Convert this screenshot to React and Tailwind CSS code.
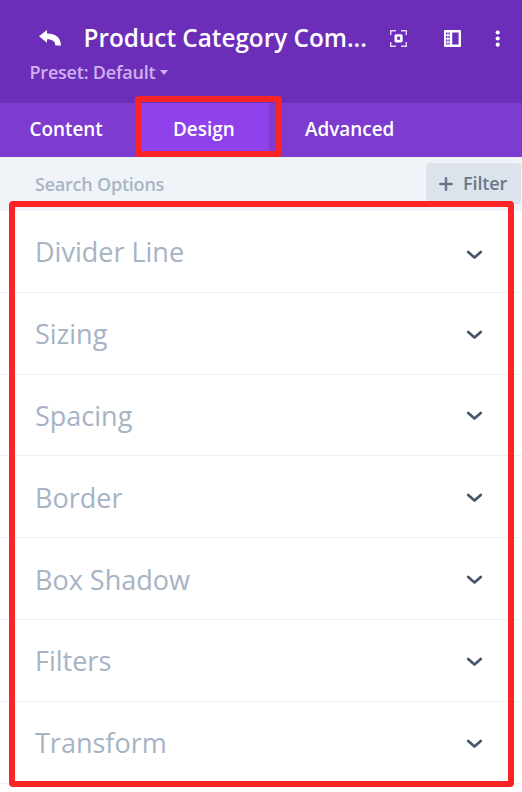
const sections = [
  { name: 'Divider Line', shift: 'mt-[8px]' },
  { name: 'Sizing', shift: 'mt-[3px]' },
  { name: 'Spacing', shift: 'mt-[3px]' },
  { name: 'Border', shift: 'mt-[3px]' },
  { name: 'Box Shadow', shift: 'mt-[3px]' },
  { name: 'Filters', shift: 'mt-[4px]' },
  { name: 'Transform', shift: 'mt-[4px]' },
];

function BackIcon() {
  return (
    <svg className="ml-[39px] mt-[30px] h-4 w-[22px] shrink-0" viewBox="0 0 22 16" fill="#fff">
      <path d="M0 6.300 8 0v3.500c8.500 0 14 4.300 14 12h-5.600C16.400 11.500 13.500 9.200 8 9.200v3.600z" />
    </svg>
  );
}

function FocusIcon() {
  return (
    <svg className="h-[17px] w-[17px]" viewBox="0 0 17 17" fill="none" stroke="#fff">
      <path strokeWidth="1.4" stroke="#e6d8f5" d="M.7 5V.7H6M11 .7h5.300V5M16.300 12v4.300H11M6 16.300H.7V12" />
      <rect x="5.800" y="5.500" width="5.600" height="5.600" rx=".4" strokeWidth="2.600" />
    </svg>
  );
}

function PanelIcon() {
  return (
    <svg className="h-[17px] w-[17px]" viewBox="0 0 17 17">
      <path fill="#fff" fillRule="evenodd" d="M1 0h15a1 1 0 0 1 1 1v15a1 1 0 0 1-1 1H1a1 1 0 0 1-1-1V1a1 1 0 0 1 1-1zM2 2.400v2h3.800v-2zM2 6v2h3.800V6zM2 9.400v2h3.800v-2zM2 12.800v1.800h3.800v-1.800zM8.200 2.400v12.200h6.400V2.400z" />
      <path stroke="#fff" strokeWidth=".8" d="M3.900 1v15" />
    </svg>
  );
}

function Chevron() {
  return (
    <svg className="h-[10px] w-[18px]" viewBox="0 0 18 10" fill="none" stroke="#46566a" strokeWidth="2.700" strokeLinecap="round" strokeLinejoin="round">
      <path d="m2.200 2 6.300 5.600L14.800 2" />
    </svg>
  );
}

export default function App() {
  return (
    <div className="relative h-[792px] w-[522px] overflow-hidden bg-white font-['Open_Sans',sans-serif]">
      <header className="h-[103px] bg-[#6c2eb9] text-white">
        <div className="flex h-[57px]">
          <BackIcon />
          <h1 className="ml-[22.500px] mt-[21px] w-[306.500px] shrink-0 whitespace-nowrap text-[24.300px] font-semibold leading-[34px]">Product Category Com...</h1>
          <div className="mt-[30px] flex items-start">
            <FocusIcon />
            <span className="ml-[37px]"><PanelIcon /></span>
            <svg className="ml-[34px] h-[17px] w-[6px]" viewBox="0 0 6 17" fill="#fff">
              <circle cx="2.700" cy="2.500" r="2.100" /><circle cx="2.700" cy="8.500" r="2.100" /><circle cx="2.700" cy="14.700" r="2.100" />
            </svg>
          </div>
        </div>
        <div className="ml-[29.500px] mt-[2px] flex items-center text-[18px] font-semibold leading-[26px] tracking-[-0.22px] text-[#cfb0ee]">
          <span>Preset: Default</span>
          <svg className="ml-[5px] mt-[1px] h-[5px] w-[8px]" viewBox="0 0 8 5" fill="currentColor"><path d="M0 0h8L4 5z" /></svg>
        </div>
      </header>
      <nav className="flex h-[54px] bg-[#7e3bd0] text-[18.900px] font-semibold leading-[52px] text-white">
        <span className="w-[139px] pl-[29.500px]">Content</span>
        <span className="w-[130px] bg-[#8f42ec] pl-[34px]">Design</span>
        <span className="pl-[36px]">Advanced</span>
      </nav>
      <div className="flex h-[54px] justify-between bg-[#f0f4f8]">
        <span className="pl-[35px] text-[18px] font-semibold leading-[54px] tracking-[-0.22px] text-[#a8b5c3]">Search Options</span>
        <button className="mr-[1px] mt-[6px] flex h-[41px] w-[95px] items-center rounded-[4px] bg-[#dde3eb] pl-[13px] text-[18px] font-semibold tracking-[-0.1px] text-[#68788a]">
          <svg className="mr-[10px] h-[14px] w-[14px]" viewBox="0 0 14 14" stroke="currentColor" strokeWidth="2.500" strokeLinecap="round"><path d="M7 1.300v11.400M1.300 7h11.400" /></svg>
          Filter
        </button>
      </div>
      <main>
        {sections.map(({ name, shift }) => (
          <div key={name} className="flex h-[81.8px] items-center justify-between border-b border-[#eef1f4] pl-[35px] pr-[38px]">
            <span className="pt-[2px] text-[27px] leading-[38px] text-[#a5b3c4]">{name}</span>
            <span className={shift}><Chevron /></span>
          </div>
        ))}
      </main>
      <div className="absolute left-[135px] top-[96px] h-[61px] w-[147px] rounded-[4px] border-6 border-[#fa2426]" />
      <div className="absolute left-[9px] top-[201px] h-[586px] w-[505px] rounded-[4px] border-6 border-[#fa2426]" />
    </div>
  );
}
